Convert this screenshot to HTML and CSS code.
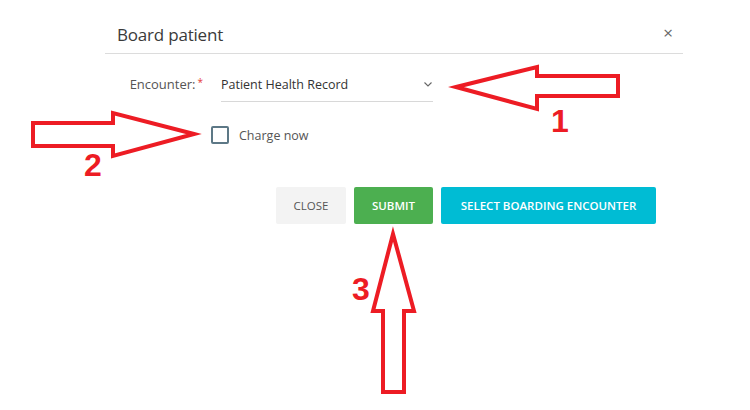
FILE: index.html
```html
<!DOCTYPE html>
<html>
<head>
<meta charset="utf-8">
<link rel="stylesheet" href="styles.css">
</head>
<body>
<div class="page">
  <div class="dialog">
    <div class="header">
      <div class="title">Board patient</div>
      <div class="close-x">×</div>
    </div>
    <div class="body">
      <div class="row">
        <div class="label">Encounter:<span class="req">*</span></div>
        <div class="select">
          <span class="value">Patient Health Record</span>
          <svg class="chev" width="8" height="5" viewBox="0 0 8 5"><path d="M0.5 0.5 L4 4 L7.5 0.5" fill="none" stroke="#666" stroke-width="1.1"/></svg>
        </div>
      </div>
      <label class="check-row">
        <span class="box"></span>
        <span class="check-label">Charge now</span>
      </label>
      <div class="actions">
        <button class="btn btn-close">CLOSE</button>
        <button class="btn btn-submit">SUBMIT</button>
        <button class="btn btn-select">SELECT BOARDING ENCOUNTER</button>
      </div>
    </div>
  </div>
  <svg class="annot" width="750" height="410" viewBox="0 0 750 410">
    <g fill="none" stroke="#ed1c24" stroke-width="4" stroke-linejoin="miter">
      <path d="M456 87 L537 67 L537 76 L618 76 L618 96 L537 96 L537 109 Z"/>
      <path d="M194 134 L113 113 L113 123 L33 123 L33 146 L113 146 L113 156 Z"/>
      <path d="M393 234 L373 311 L383 311 L383 392 L404 392 L404 311 L414 311 Z"/>
    </g>
    <g fill="#ed1c24" font-family="Liberation Sans, Arial, sans-serif" font-weight="bold" font-size="32">
      <text x="551" y="132">1</text>
      <text x="84" y="176">2</text>
      <text x="352" y="300">3</text>
    </g>
  </svg>
</div>
</body>
</html>
```
FILE: styles.css
```css
html, body {
  margin: 0;
  padding: 0;
  background: #fff;
}
.page {
  position: relative;
  width: 750px;
  height: 410px;
  font-family: "Open Sans", "Noto Sans", sans-serif;
}
.dialog {
  margin-left: 105px;
  width: 578px;
  padding-top: 17px;
}
.header {
  display: flex;
  align-items: center;
  justify-content: space-between;
  height: 36px;
  padding: 0 12px 0 12px;
  border-bottom: 1px solid #dcdcdc;
}
.title {
  font-size: 17px;
  color: #3a3a3a;
  letter-spacing: -0.2px;
  margin-top: -1px;
}
.close-x {
  font-size: 17px;
  color: #666;
  margin-right: -2px;
  margin-top: -6px;
}
.body {
  padding-top: 18px;
}
.row {
  display: flex;
  align-items: flex-start;
}
.label {
  width: 98px;
  text-align: right;
  font-size: 13px;
  color: #555;
  padding-top: 3px;
}
.req {
  color: #e53935;
  font-size: 10px;
  vertical-align: top;
  margin-left: 2px;
}
.select {
  margin-left: 18px;
  width: 212px;
  height: 30px;
  border-bottom: 1px solid #d8d8d8;
  display: flex;
  justify-content: space-between;
  align-items: flex-start;
  box-sizing: border-box;
  padding-top: 4px;
}
.value {
  font-size: 12.5px;
  color: #333;
}
.chev {
  margin-right: 1px;
  margin-top: 6px;
}
.check-row {
  display: flex;
  align-items: center;
  margin-left: 106px;
  margin-top: 24px;
}
.box {
  width: 14px;
  height: 14px;
  border: 2px solid #5d7886;
  border-radius: 2px;
}
.check-label {
  margin-left: 10px;
  font-size: 12.5px;
  color: #555;
}
.actions {
  display: flex;
  gap: 8px;
  margin-left: 171px;
  margin-top: 43px;
}
.btn {
  height: 37px;
  border: none;
  border-radius: 2px;
  font-family: "Open Sans", "Noto Sans", sans-serif;
  font-size: 11.5px;
  font-weight: 600;
  padding: 0;
  color: #fff;
}
.btn-close {
  background: #f3f3f3;
  color: #555;
  font-weight: 400;
  width: 70px;
}
.btn-submit {
  background: #4caf50;
  width: 79px;
}
.btn-select {
  background: #00bcd4;
  width: 215px;
}
.annot {
  position: absolute;
  left: 0;
  top: 0;
  pointer-events: none;
}
```
